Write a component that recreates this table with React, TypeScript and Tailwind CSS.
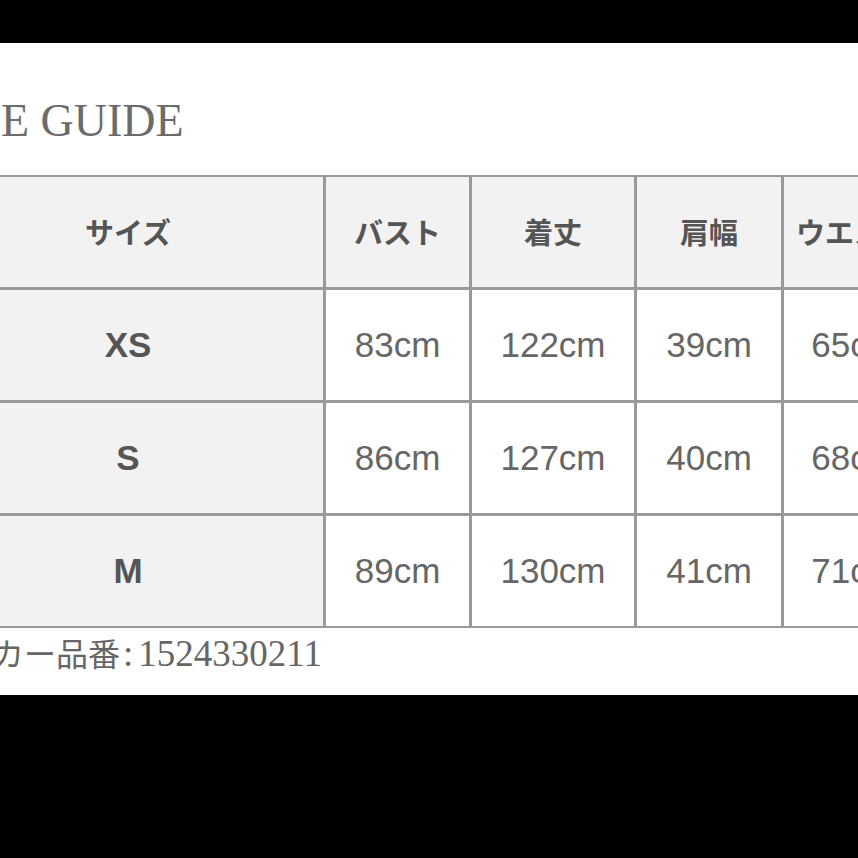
import React from "react";

const headers = ["サイズ", "バスト", "着丈", "肩幅", "ウエスト"];
const rows = [
  ["XS", "83cm", "122cm", "39cm", "65cm"],
  ["S", "86cm", "127cm", "40cm", "68cm"],
  ["M", "89cm", "130cm", "41cm", "71cm"],
];

export default function App() {
  return (
    <div className="w-[858px] h-[858px] bg-black overflow-hidden">
      <div className="mt-[43px] h-[652px] w-[858px] bg-white overflow-hidden">
        <div className="pt-[55px] pl-[1px] h-[132px] text-[46px] leading-none text-[#6b6b6b] whitespace-nowrap font-['Liberation_Serif',serif]">
          E GUIDE
        </div>
        <div className="ml-[-67px] w-[1060px] grid grid-cols-[390px_143px_162px_144px_140px_60px] grid-rows-[110px_110px_110px_110px] gap-[3px] bg-[#9a9a9a] py-[2px]">
          {headers.map((h) => (
            <div
              key={h}
              className="bg-[#f2f2f2] flex items-center justify-center text-[29px] font-bold text-[#555555] font-['Noto_Sans_CJK_JP',sans-serif]"
            >
              {h}
            </div>
          ))}
          <div className="bg-[#f2f2f2]" />
          {rows.map((r) => (
            <React.Fragment key={r[0]}>
              <div className="bg-[#f2f2f2] flex items-center justify-center text-[35px] font-bold text-[#555555] font-['Liberation_Sans','Noto_Sans_CJK_JP',sans-serif]">
                {r[0]}
              </div>
              {r.slice(1).map((v, j) => (
                <div
                  key={j}
                  className="bg-white flex items-center justify-center text-[35px] text-[#666666] font-['Liberation_Sans','Noto_Sans_CJK_JP',sans-serif]"
                >
                  {v}
                </div>
              ))}
              <div className="bg-white" />
            </React.Fragment>
          ))}
        </div>
        <div className="mt-[7px] ml-[-8px] whitespace-nowrap text-[#666666] leading-none flex items-baseline">
          <span className="text-[32px] font-['Noto_Sans_CJK_JP',sans-serif]">カー品番</span>
          <span className="text-[37px] ml-[3px] font-['Liberation_Serif',serif]">:</span>
          <span className="text-[37px] ml-[5px] font-['Liberation_Serif',serif]">1524330211</span>
        </div>
      </div>
    </div>
  );
}
